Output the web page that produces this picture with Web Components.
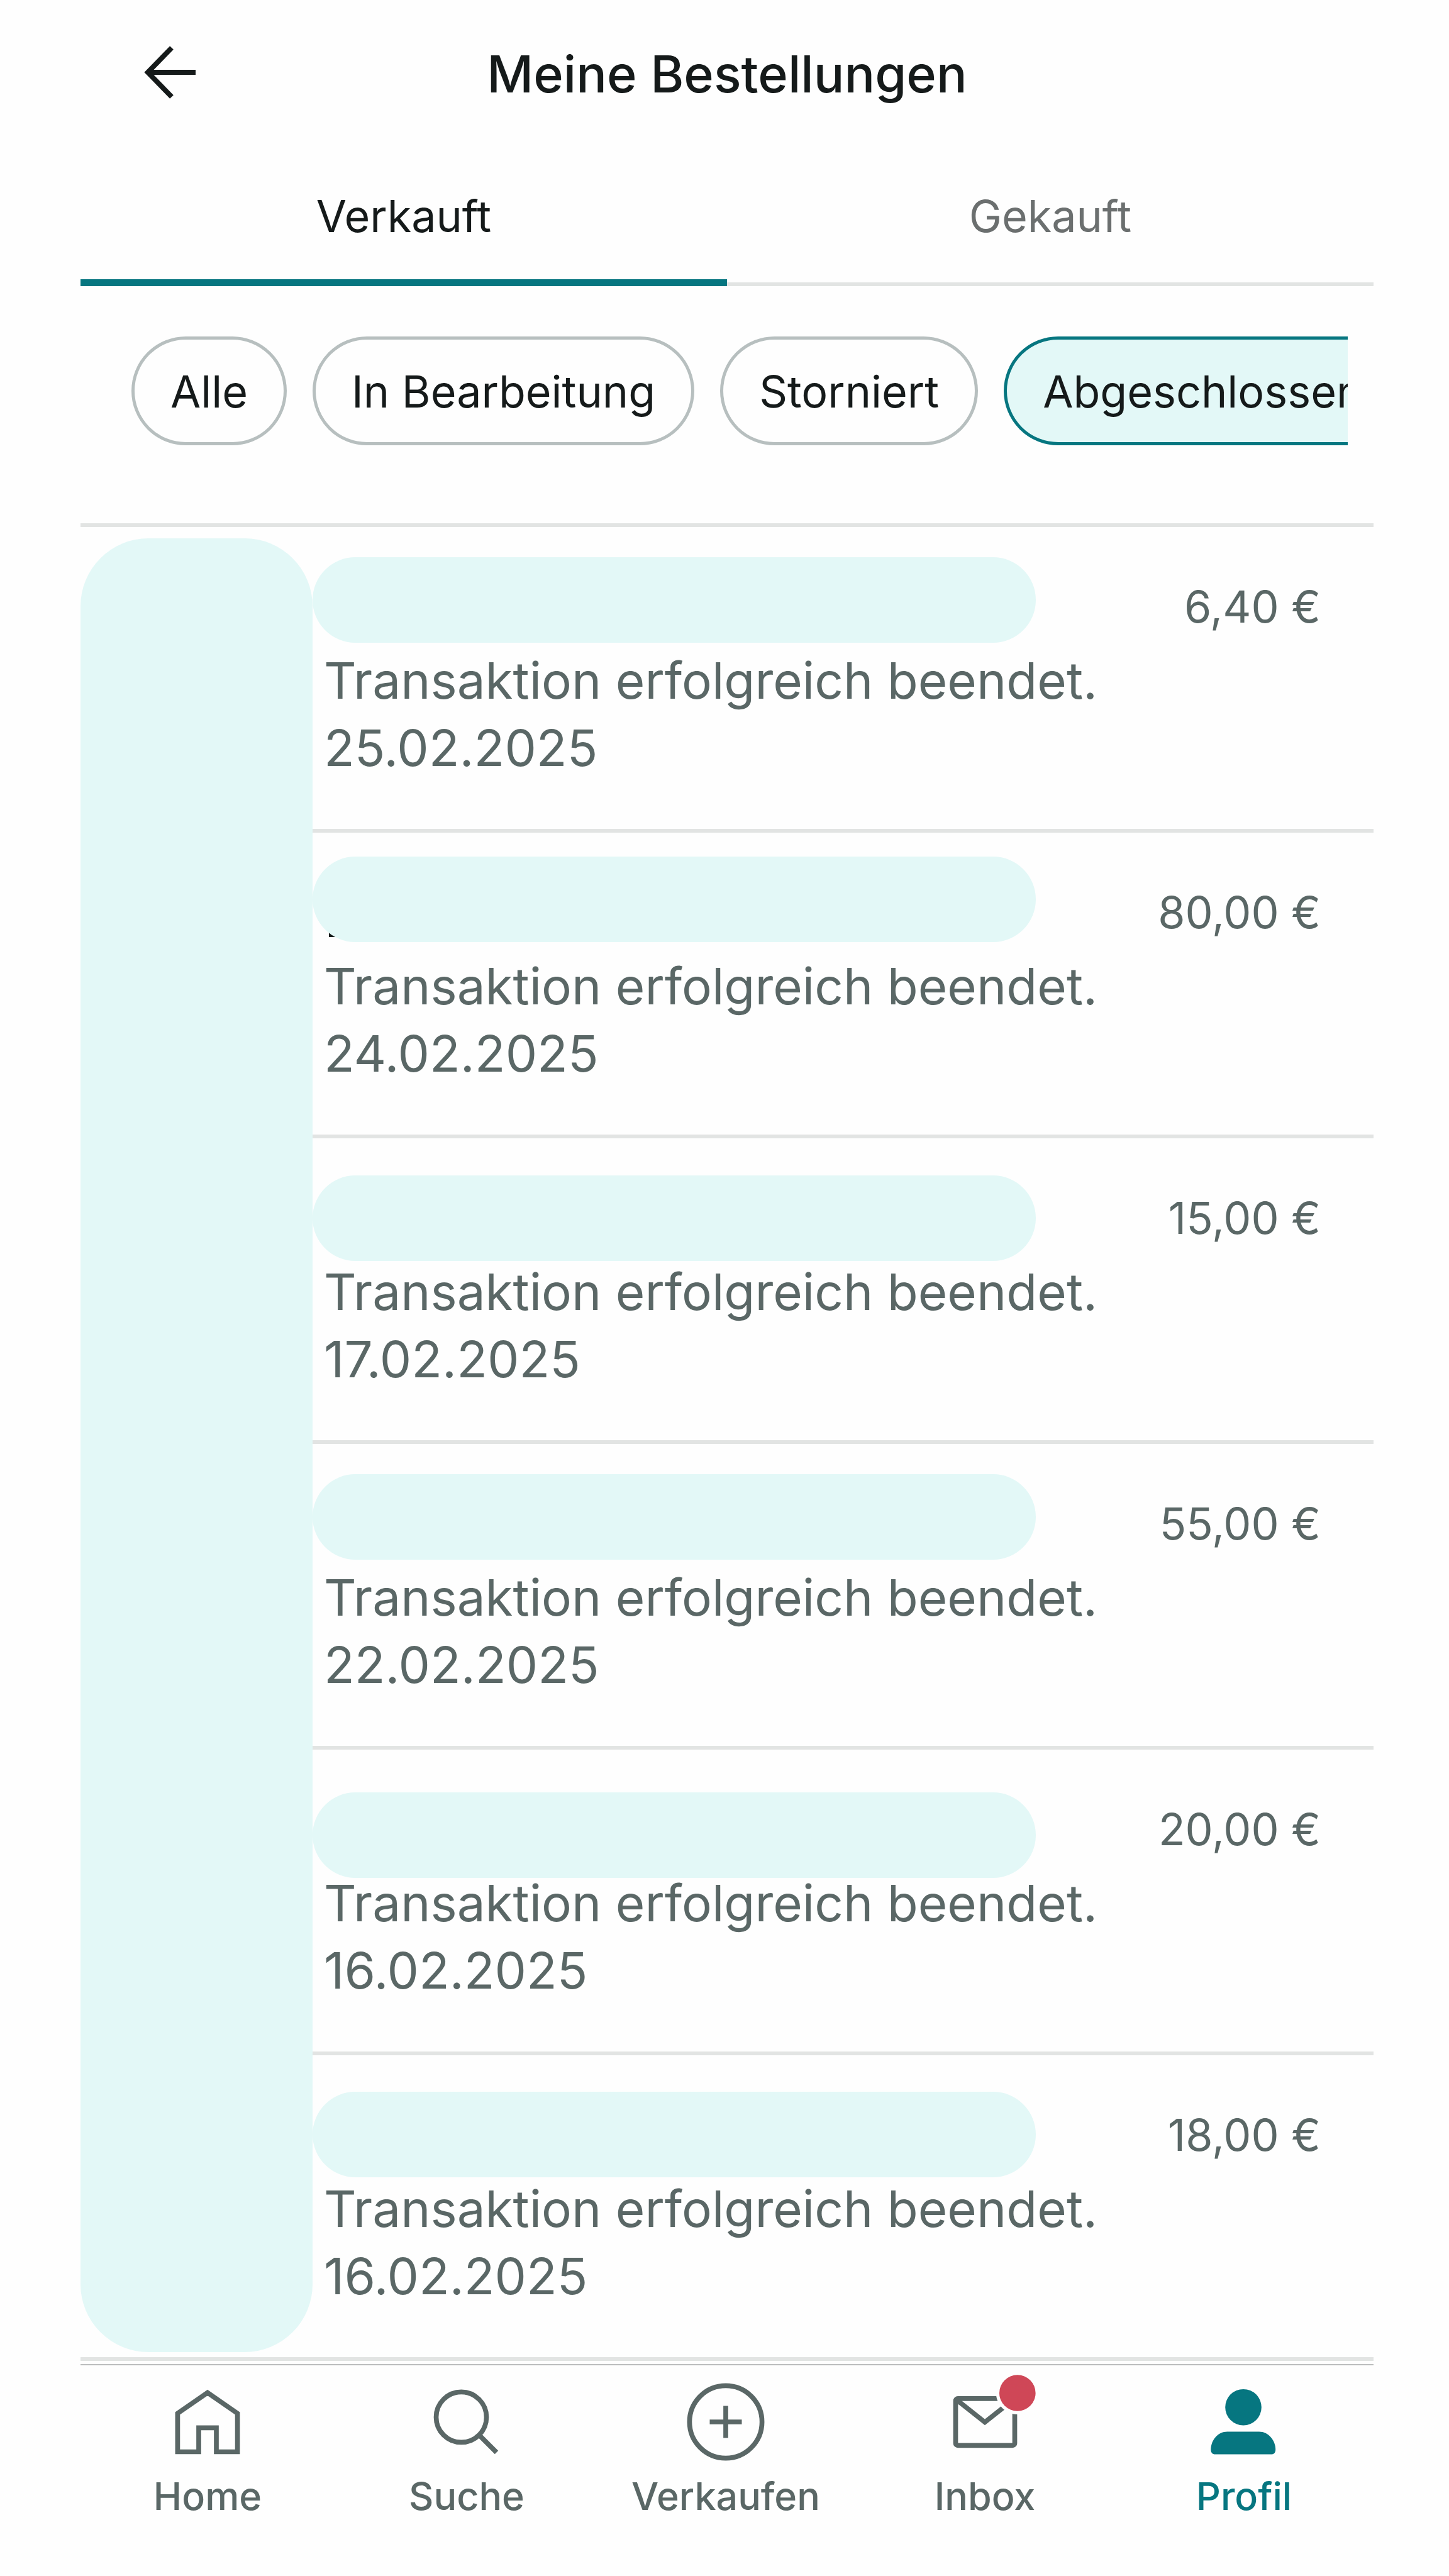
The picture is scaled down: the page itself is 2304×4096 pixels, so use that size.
<!DOCTYPE html>
<html lang="de">
<head>
<meta charset="utf-8">
<title>Meine Bestellungen</title>
<style>
:root{
  --ink:#151a1a; --muted:#5a6766; --soft:#6b6f6f; --teal:#067680; --mint:#e3f8f7;
  --line:#e2e4e3; --outline:#b7bfbf; --bg:#fefefe;
}
body{margin:0;background:var(--bg);color:var(--ink);font-family:Inter,"Liberation Sans",sans-serif}
</style>
</head>
<body>
<order-app>
  <app-header slot="header">Meine Bestellungen</app-header>
  <tab-bar slot="tabs">
    <tab-item active>Verkauft</tab-item>
    <tab-item>Gekauft</tab-item>
  </tab-bar>
  <filter-bar slot="filters">
    <filter-chip>Alle</filter-chip>
    <filter-chip>In Bearbeitung</filter-chip>
    <filter-chip>Storniert</filter-chip>
    <filter-chip active>Abgeschlossen</filter-chip>
  </filter-bar>
  <order-list slot="list">
    <order-row mask="48" date="25.02.2025" price="6,40 €">Transaktion erfolgreich beendet.</order-row>
    <order-row mask="38" stem date="24.02.2025" price="80,00 €">Transaktion erfolgreich beendet.</order-row>
    <order-row mask="59" date="17.02.2025" price="15,00 €">Transaktion erfolgreich beendet.</order-row>
    <order-row mask="48" date="22.02.2025" price="55,00 €">Transaktion erfolgreich beendet.</order-row>
    <order-row mask="68" date="16.02.2025" price="20,00 €">Transaktion erfolgreich beendet.</order-row>
    <order-row mask="58" date="16.02.2025" price="18,00 €">Transaktion erfolgreich beendet.</order-row>
  </order-list>
  <nav-bar slot="nav">
    <nav-item icon="home">Home</nav-item>
    <nav-item icon="search">Suche</nav-item>
    <nav-item icon="plus">Verkaufen</nav-item>
    <nav-item icon="mail">Inbox</nav-item>
    <nav-item icon="profile" active>Profil</nav-item>
  </nav-bar>
</order-app>
<script>
const define = (name, render) => customElements.define(name, class extends HTMLElement {
  constructor() {
    super();
    this.attachShadow({ mode: 'open' });
  }
  connectedCallback() {
    this.shadowRoot.innerHTML = render(this);
  }
});

define('order-app', () => `
  <style>
    :host{display:block;padding:0 120px 0 128px}
    main{display:flex;flex-direction:column}
  </style>
  <main>
    <slot name="header"></slot>
    <slot name="tabs"></slot>
    <slot name="filters"></slot>
    <slot name="list"></slot>
    <slot name="nav"></slot>
  </main>`);

define('app-header', () => `
  <style>
    :host{display:block}
    header{display:grid;grid-template-columns:1fr auto 1fr;align-items:center;padding:55px 80px}
    button{justify-self:start;padding:0;border:0;background:none;color:inherit}
    svg{display:block;width:126px;height:126px;fill:none;stroke:currentColor;stroke-width:8}
    h1{margin:0;font-size:81px;line-height:96px;font-weight:500}
  </style>
  <header>
    <button type="button" aria-label="Zurück"><svg viewBox="0 0 126 126"><path d="M65 21L27 60l38 39M28 60h75"/></svg></button>
    <h1><slot></slot></h1>
  </header>`);

define('tab-bar', () => `
  <style>
    :host{display:block}
    div{display:grid;grid-template-columns:1fr 1fr}
  </style>
  <div role="tablist"><slot></slot></div>`);

define('tab-item', el => `
  <style>
    :host{display:block}
    button{display:block;width:100%;margin:0;padding:66px 0 63px;border:0;border-bottom:6px solid var(--line);
      background:none;color:var(--soft);font-family:inherit;font-size:70px;line-height:84px}
    :host([active]) button{padding-bottom:58px;border-bottom:11px solid var(--teal);color:var(--ink)}
  </style>
  <button type="button" role="tab" aria-selected="${el.hasAttribute('active')}"><slot></slot></button>`);

define('filter-bar', () => `
  <style>
    :host{display:block;padding:80px 41px 124px 81px}
    div{display:flex;gap:41px;overflow:hidden}
  </style>
  <div><slot></slot></div>`);

define('filter-chip', el => `
  <style>
    :host{display:block;flex:none}
    button{display:block;margin:0;padding:3px 57px 0;border:5px solid var(--outline);border-radius:87px;
      background:none;color:var(--ink);font-family:inherit;font-size:70px;line-height:160px;white-space:nowrap}
    :host([active]) button{border-color:var(--teal);background:var(--mint)}
  </style>
  <button type="button" aria-pressed="${el.hasAttribute('active')}"><slot></slot></button>`);

define('order-list', () => `
  <style>
    :host{display:flex;border-top:6px solid var(--line);border-bottom:6px solid var(--line)}
    .thumbs{flex:none;width:369px;margin:18px 0 8px;border-radius:108px;background:var(--mint)}
    .rows{flex:1;display:flex;flex-direction:column}
    ::slotted(:not(:last-child)){border-bottom:6px solid var(--line)}
  </style>
  <div class="thumbs"></div>
  <div class="rows"><slot></slot></div>`);

define('order-row', el => `
  <style>
    :host{display:block;position:relative;color:var(--muted)}
    article{display:flex;justify-content:space-between;align-items:flex-start;padding:85px 84px 76px 18px}
    .info{padding-top:105px;font-size:80px;line-height:107px}
    .price{font-size:70px;line-height:84px;white-space:nowrap}
    p{margin:0}
    .mask,.stem{position:absolute}
    .mask{left:0;top:${el.getAttribute('mask')}px;width:1150px;height:136px;border-radius:68px;background:var(--mint)}
    .stem{left:26px;top:140px;width:16px;height:26px;background:var(--ink)}
  </style>
  <article>
    <div class="info"><p><slot></slot></p><p><time>${el.getAttribute('date')}</time></p></div>
    <div class="price">${el.getAttribute('price')}</div>
  </article>
  ${el.hasAttribute('stem') ? '<div class="stem"></div>' : ''}
  <div class="mask"></div>`);

define('nav-bar', () => `
  <style>
    :host{display:block;margin-top:5px;border-top:2px solid #bbbdbd}
    nav{display:grid;grid-template-columns:repeat(5,1fr);margin-left:-4px;padding:27px 0 92px}
  </style>
  <nav><slot></slot></nav>`);

const icons = {
  home: '<path d="M15.4 49.4L63 16.5l47.6 32.9v61.1H77V72.4H49v38.1H15.4z"/>',
  search: '<circle cx="54.5" cy="55.4" r="40"/><path d="M82 83l28.5 28.5"/>',
  plus: '<circle cx="63" cy="63" r="57.6"/><path d="M37.5 63h51M63 37.5v51"/>',
  mail: '<rect x="16.5" y="25.9" width="94" height="74.5" rx="3.5"/><path d="M17 27l46 36.4L109 27"/><circle cx="114.8" cy="17" r="34" fill="var(--bg)" stroke="none"/><circle cx="114.8" cy="17" r="28.8" fill="#cf4757" stroke="none"/>',
  profile: '<g fill="currentColor" stroke="none"><circle cx="62" cy="39.7" r="28.8"/><path d="M36.500 78.400H87c14.500 0 26.200 13.600 26.200 28.600 0 5-2.700 7.600-6.700 7.600H17c-4 0-6.700-2.600-6.700-7.600C10.300 92 21.500 78.400 36.500 78.400z"/></g>'
};

define('nav-item', el => `
  <style>
    :host{display:block}
    a{display:flex;flex-direction:column;align-items:center;gap:19px;color:var(--muted);
      font-size:61px;line-height:72px;font-weight:500;text-decoration:none}
    :host([active]) a{color:var(--teal)}
    svg{display:block;width:126px;height:126px;overflow:visible;fill:none;stroke:currentColor;stroke-width:7.7}
  </style>
  <a href="#${el.getAttribute('icon')}"><svg viewBox="0 0 126 126" aria-hidden="true">${icons[el.getAttribute('icon')]}</svg><span><slot></slot></span></a>`);
</script>
</body>
</html>
